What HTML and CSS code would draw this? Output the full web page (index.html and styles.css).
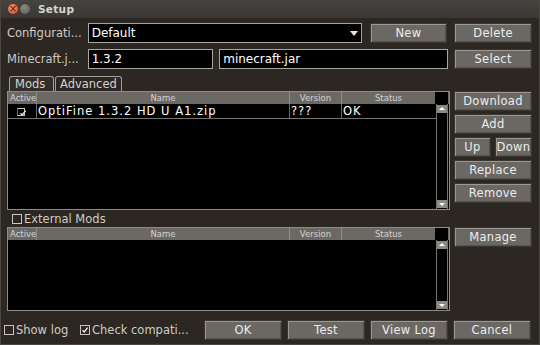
FILE: index.html
```html
<!DOCTYPE html>
<html lang="en">
  <head>
    <meta charset="utf-8">
    <title>Setup</title>
    <link rel="stylesheet" href="styles.css">
  </head>
  <body>
  <div id="window">

    <div id="titlebar">
      <span class="wbtn close">&times;</span>
      <span class="wbtn min"></span>
      <span class="wtitle">Setup</span>
    </div>

    <div id="content">

      <div class="row">
        <span class="label">Configurati...</span>
        <div class="combo">Default<span class="arrow"></span></div>
        <button class="btn">New</button>
        <button class="btn">Delete</button>
      </div>

      <div class="row">
        <span class="label">Minecraft.j...</span>
        <div class="field short">1.3.2</div>
        <div class="field long">minecraft.jar</div>
        <button class="btn">Select</button>
      </div>

      <div id="main">
        <div class="tabs">
          <span class="tab active">Mods</span>
          <span class="tab">Advanced</span>
        </div>

        <div class="table mods">
          <div class="thead">
            <span class="c-active">Active</span>
            <span class="c-name">Name</span>
            <span class="c-ver">Version</span>
            <span class="c-status">Status</span>
            <span class="c-corner"></span>
          </div>
          <div class="tbody">
            <div class="rows">
              <div class="trow">
                <span class="c-active"><span class="check"><svg viewBox="0 0 8 8"><path d="M1.5 4.2 L3.3 6 L6.6 1.6" /></svg></span></span>
                <span class="c-name">OptiFine 1.3.2 HD U A1.zip</span>
                <span class="c-ver">???</span>
                <span class="c-status">OK</span>
              </div>
            </div>
            <div class="scroll">
              <span class="sarrow up"></span>
              <span class="sarrow down"></span>
            </div>
          </div>
        </div>

        <div class="side top">
          <button class="btn">Download</button>
          <button class="btn">Add</button>
          <div class="pair">
            <button class="btn">Up</button>
            <button class="btn">Down</button>
          </div>
          <button class="btn">Replace</button>
          <button class="btn">Remove</button>
        </div>

        <div class="ext">
          <span class="check"></span>External Mods
        </div>

        <div class="table external">
          <div class="thead">
            <span class="c-active">Active</span>
            <span class="c-name">Name</span>
            <span class="c-ver">Version</span>
            <span class="c-status">Status</span>
            <span class="c-corner"></span>
          </div>
          <div class="tbody">
            <div class="rows"></div>
            <div class="scroll">
              <span class="sarrow up"></span>
              <span class="sarrow down"></span>
            </div>
          </div>
        </div>

        <div class="side bottom">
          <button class="btn">Manage</button>
        </div>
      </div>

      <div id="footer">
        <span class="opt"><span class="check"></span>Show log</span>
        <span class="opt wide"><span class="check"><svg viewBox="0 0 8 8"><path d="M1.5 4.2 L3.3 6 L6.6 1.6" /></svg></span>Check compati...</span>
        <button class="btn">OK</button>
        <button class="btn">Test</button>
        <button class="btn">View Log</button>
        <button class="btn">Cancel</button>
      </div>

    </div>
  </div>
  </body>
</html>
```

FILE: styles.css
```css
html, body {
  margin: 0;
  padding: 0;
  background: #2a2521;
}

body {
  font-family: "DejaVu Sans", sans-serif;
  font-size: 11px;
  color: #dcdcdc;
}

#window {
  width: 540px;
  height: 345px;
  box-sizing: border-box;
  border: 1px solid #4a4640;
  border-top: 0;
  background: #2c2723;
  display: flex;
  flex-direction: column;
}

#titlebar {
  height: 18px;
  background: linear-gradient(#46443f, #3a3834);
  display: flex;
  align-items: center;
  padding-left: 7px;
}

.wbtn {
  width: 10px;
  height: 10px;
  border-radius: 50%;
  margin-right: 2px;
  font-size: 10px;
  line-height: 10px;
  text-align: center;
  color: #3a2a20;
}

.wbtn.close {
  background: radial-gradient(circle at 40% 35%, #f8906a, #df4a1c);
}

.wbtn.min {
  background: radial-gradient(circle at 40% 35%, #8a8883, #5a5853);
}

.wtitle {
  margin-left: 6px;
  font-weight: bold;
  color: #d8d4cb;
  font-size: 10.5px;
  letter-spacing: 0.3px;
}

#content {
  flex: 1;
  padding: 5px 7px 0 6px;
  display: flex;
  flex-direction: column;
}

.row {
  display: flex;
  align-items: center;
  height: 20px;
  margin-bottom: 6px;
}

.label {
  width: 81px;
  font-size: 11.5px;
  color: #cfcac2;
  white-space: nowrap;
  overflow: hidden;
}

.combo, .field {
  height: 20px;
  box-sizing: border-box;
  border: 1px solid #a9a59f;
  background: #000;
  color: #fff;
  font-size: 12px;
  line-height: 18px;
  padding-left: 3px;
  position: relative;
}

.combo {
  width: 275px;
  margin-right: 8px;
}

.arrow {
  position: absolute;
  right: 3px;
  top: 7px;
  border-left: 4px solid transparent;
  border-right: 4px solid transparent;
  border-top: 5px solid #e6e6e6;
}

.field.short {
  width: 126px;
  margin-right: 6px;
}

.field.long {
  width: 230px;
  margin-right: 6px;
}

.btn {
  width: 78px;
  height: 20px;
  box-sizing: border-box;
  background: #6b6864;
  border: 1px solid #3a3733;
  box-shadow: inset 1px 1px 0 #9b9893, inset -1px -1px 0 #55524e;
  color: #ececec;
  font-family: "DejaVu Sans", sans-serif;
  font-size: 11.5px;
  letter-spacing: 0.3px;
  padding: 0;
  margin: 0;
}

.row .btn + .btn {
  margin-left: 7px;
}

#main {
  display: grid;
  grid-template-columns: 443px 78px;
  grid-template-rows: 16px 119px 17px 84px;
  column-gap: 4px;
}

.tabs {
  grid-column: 1;
  grid-row: 1;
  display: flex;
  align-items: flex-end;
  padding-left: 2px;
}

.tab {
  height: 15px;
  box-sizing: border-box;
  border: 1px solid #a09c96;
  border-bottom: 0;
  border-radius: 3px 3px 0 0;
  padding: 0 4px;
  font-size: 11.5px;
  line-height: 14px;
  color: #d6d2cb;
  margin-right: 1px;
}

.tab.active {
  width: 45px;
  padding: 0 5px;
  background: #332e29;
}

.table {
  grid-column: 1;
  border: 1px solid #8e8a84;
  background: #000;
  display: flex;
  flex-direction: column;
  box-sizing: border-box;
}

.table.mods {
  grid-row: 2;
}

.table.external {
  grid-row: 4;
}

.thead, .trow {
  display: flex;
  height: 12px;
}

.thead {
  background: #6c6964;
  font-size: 8.5px;
  line-height: 12px;
  color: #d2d2d2;
}

.thead span {
  box-sizing: border-box;
  border-left: 1px solid #8f8c87;
  text-align: center;
}

.thead .c-active {
  border-left: 0;
  text-align: left;
  padding-left: 2px;
}

.thead .c-corner {
  background: #000;
  border-left: 0;
}

.c-active { width: 28px; }
.c-name { width: 253px; }
.c-ver { width: 52px; }
.c-status { width: 94px; }
.c-corner { width: 13px; }

.tbody {
  flex: 1;
  display: flex;
}

.rows {
  flex: 1;
}

.trow {
  height: 14px;
  border-bottom: 1px solid #77736e;
  color: #fff;
  font-size: 11.5px;
  line-height: 14px;
  letter-spacing: 1px;
}

.trow span {
  box-sizing: border-box;
  border-left: 1px solid #6c6964;
  padding-left: 1px;
  white-space: nowrap;
}

.trow .c-active {
  border-left: 0;
  text-align: center;
  padding-left: 0;
  letter-spacing: 0;
}

.check {
  display: inline-block;
  width: 8px;
  height: 8px;
  border: 1px solid #c8c4be;
  vertical-align: -1px;
  margin-right: 2px;
}

.check svg {
  display: block;
  width: 8px;
  height: 8px;
  fill: none;
  stroke: #f0f0f0;
  stroke-width: 1.3;
}

.scroll {
  width: 12px;
  box-sizing: border-box;
  border-left: 1px solid #77736e;
  border-right: 1px solid #77736e;
  margin-right: 1px;
  display: flex;
  flex-direction: column;
  justify-content: space-between;
}

.sarrow {
  height: 8px;
  background: #8c8883;
  position: relative;
  margin: 1px 0;
}

.sarrow::after {
  content: "";
  position: absolute;
  left: 2px;
  border-left: 3px solid transparent;
  border-right: 3px solid transparent;
}

.sarrow.up::after {
  top: 2px;
  border-bottom: 3px solid #fff;
}

.sarrow.down::after {
  top: 3px;
  border-top: 3px solid #fff;
}

.side {
  grid-column: 2;
  display: flex;
  flex-direction: column;
}

.side.top {
  grid-row: 2;
  gap: 3px;
}

.side.bottom {
  grid-row: 4;
}

.side .btn {
  height: 20px;
}

.pair {
  display: flex;
  justify-content: space-between;
}

.pair .btn {
  width: 37px;
}

.ext {
  grid-column: 1;
  grid-row: 3;
  display: flex;
  align-items: center;
  padding-left: 5px;
  font-size: 11.5px;
  color: #d0ccc5;
}

#footer {
  display: flex;
  align-items: center;
  height: 20px;
  margin-top: 9px;
  margin-left: -3px;
}

.opt {
  width: 76px;
  font-size: 11.5px;
  color: #d0ccc5;
  white-space: nowrap;
}

.opt.wide {
  width: 124px;
}

#footer .btn {
  margin-left: 5px;
}

#footer .opt.wide + .btn {
  margin-left: 0;
}
```
